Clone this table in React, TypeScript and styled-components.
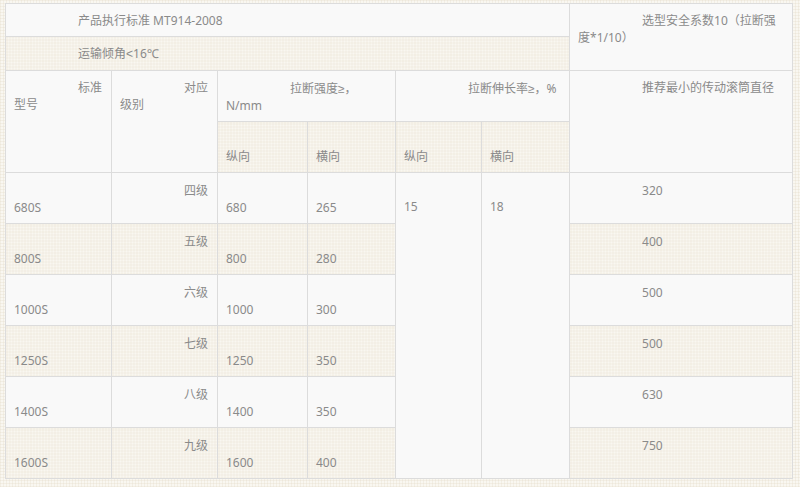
import React from "react";
import styled, { createGlobalStyle } from "styled-components";

const ZW = "\u200B";

const texture = `
  background-color: #f9f7f1;
  background-image:
    repeating-linear-gradient(0deg, rgba(225, 215, 195, 0.28) 0 1px, transparent 1px 3px),
    repeating-linear-gradient(90deg, rgba(225, 215, 195, 0.28) 0 1px, transparent 1px 3px);
`;

const GlobalStyle = createGlobalStyle`
  html, body {
    margin: 0;
    padding: 0;
  }
  body {
    ${texture}
    font-family: "Noto Sans", "Noto Sans CJK SC", sans-serif;
    font-size: 12px;
    color: #8a8a8a;
  }
`;

const Page = styled.div`
  padding: 3px 8px 8px 5px;
`;

const Table = styled.table`
  border-collapse: collapse;
  width: 787px;
  table-layout: fixed;
  border: 1px solid #dcdcdc;
`;

const Row = styled.tr`
  &:nth-child(even) > td {
    ${texture}
  }
`;

const Cell = styled.td<{ $tall?: boolean; $top?: boolean }>`
  background: #f9f9f9;
  border: 1px solid #dcdcdc;
  padding: ${p => (p.$tall ? "9px 8px 7px" : p.$top ? "8px 8px 7px" : "8px")};
  vertical-align: top;
  line-height: 17px;
  text-indent: 64px;
  height: ${p => (p.$tall ? 34 : 17)}px;
`;

const Sym = styled.span`
  font-family: "Liberation Sans", "Noto Sans", sans-serif;
  line-height: 0;
`;

const widths = [106, 106, 90, 88, 86, 88, 223];

type Grade = { model: string; level: string; warp: string; weft: string; drum: string };

const grades: Grade[] = [
  { model: "680S", level: "四级", warp: "680", weft: "265", drum: "320" },
  { model: "800S", level: "五级", warp: "800", weft: "280", drum: "400" },
  { model: "1000S", level: "六级", warp: "1000", weft: "300", drum: "500" },
  { model: "1250S", level: "七级", warp: "1250", weft: "350", drum: "500" },
  { model: "1400S", level: "八级", warp: "1400", weft: "350", drum: "630" },
  { model: "1600S", level: "九级", warp: "1600", weft: "400", drum: "750" },
];

export default function App() {
  return (
    <>
      <GlobalStyle />
      <Page>
        <Table>
          <colgroup>
            {widths.map((w, i) => (
              <col key={i} style={{ width: w }} />
            ))}
          </colgroup>
          <tbody>
            <Row>
              <Cell colSpan={6} $top>产品执行标准 MT914-2008</Cell>
              <Cell rowSpan={2}>选型安全系数10（拉断强度*1/10）</Cell>
            </Row>
            <Row>
              <Cell colSpan={6}>运输倾角<Sym>&lt;</Sym>16℃</Cell>
            </Row>
            <Row>
              <Cell rowSpan={2}>标准型号</Cell>
              <Cell rowSpan={2}>对应级别</Cell>
              <Cell colSpan={2} $tall>拉断强度<Sym>≥</Sym>，N/mm</Cell>
              <Cell colSpan={2} $tall>拉断伸长率<Sym>≥</Sym>，%</Cell>
              <Cell rowSpan={2}>推荐最小的传动滚筒直径</Cell>
            </Row>
            <Row>
              <Cell $tall>{ZW}纵向</Cell>
              <Cell $tall>{ZW}横向</Cell>
              <Cell $tall>{ZW}纵向</Cell>
              <Cell $tall>{ZW}横向</Cell>
            </Row>
            {grades.map((g, i) => (
              <Row key={g.model}>
                <Cell $tall>{ZW}{g.model}</Cell>
                <Cell $tall>{g.level}</Cell>
                <Cell $tall>{ZW}{g.warp}</Cell>
                <Cell $tall>{ZW}{g.weft}</Cell>
                {i === 0 && (
                  <>
                    <Cell rowSpan={grades.length}>{ZW}15</Cell>
                    <Cell rowSpan={grades.length}>{ZW}18</Cell>
                  </>
                )}
                <Cell $tall>{g.drum}</Cell>
              </Row>
            ))}
          </tbody>
        </Table>
      </Page>
    </>
  );
}
